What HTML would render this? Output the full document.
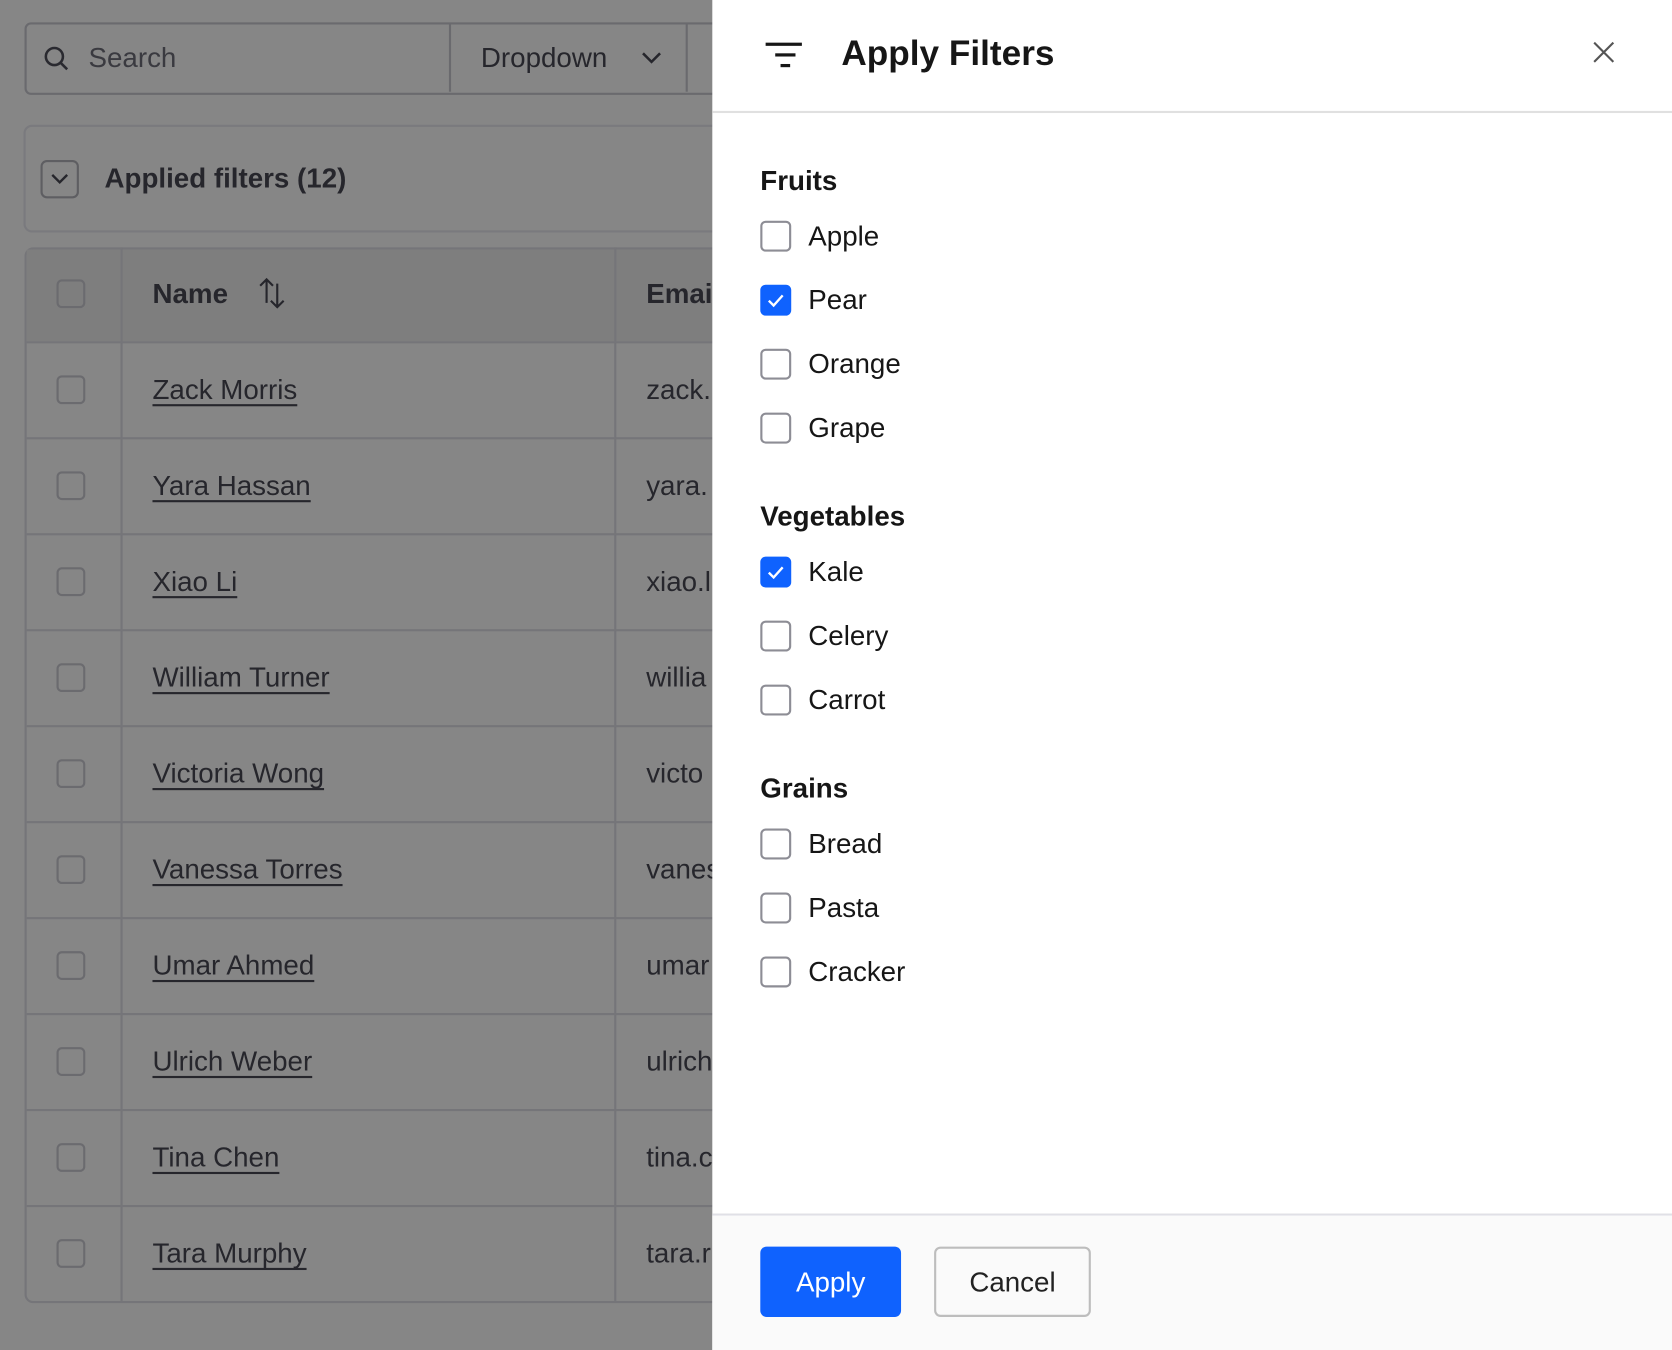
<!DOCTYPE html>
<html><head><meta charset="utf-8"><style>
html,body{margin:0;padding:0;width:1672px;height:1350px;overflow:hidden;background:#868686}
#s{position:absolute;left:0;top:0;width:1568px;height:1266px;transform:scale(1.06633,1.06635);transform-origin:0 0;font-family:"Liberation Sans",sans-serif}
.a{position:absolute}
.cb{position:absolute;width:27px;height:27px;border:2px solid #6b6b6f;border-radius:5px;box-sizing:border-box}
.lt{color:#26262c}
.pcb{position:absolute;left:713px;width:29px;height:29px;border:2px solid #8d8d95;border-radius:5px;box-sizing:border-box;background:#fff}
.pcb.on{background:#0f62fe;border-color:#0f62fe}
.lab{position:absolute;left:758px;font-size:26px;color:#161616;line-height:30px}
.sec{position:absolute;left:713px;font-size:26px;font-weight:bold;color:#161616;line-height:30px}
</style></head><body><div id="s">
<!-- left dimmed content -->
<div class="a" style="left:23px;top:21px;width:660px;height:64px;border:2px solid #6a6a6e;border-radius:6px"></div>
<div class="a" style="left:421px;top:22px;width:2px;height:64px;background:#6a6a6e"></div>
<div class="a" style="left:643px;top:22px;width:2px;height:64px;background:#6a6a6e"></div>
<svg class="a" style="left:40px;top:42px" width="26" height="26" viewBox="0 0 26 26"><circle cx="11" cy="11" r="8" fill="none" stroke="#2a2a30" stroke-width="2.4"/><path d="M17 17l6 6" stroke="#2a2a30" stroke-width="2.4"/></svg>
<div class="a" style="left:83px;top:39px;font-size:26px;color:#3a3a40">Search</div>
<div class="a lt" style="left:451px;top:39px;font-size:26px">Dropdown</div>
<svg class="a" style="left:600px;top:46px" width="22" height="16" viewBox="0 0 22 16"><path d="M3 4l8 8 8-8" fill="none" stroke="#26262c" stroke-width="2.4"/></svg>
<div class="a" style="left:22px;top:117px;width:680px;height:97px;border:2px solid #7a7a7e;border-radius:8px"></div>
<div class="a" style="left:38px;top:150px;width:36px;height:36px;border:2px solid #5e5e62;border-radius:6px;box-sizing:border-box"></div>
<svg class="a" style="left:44px;top:158px" width="24" height="20" viewBox="0 0 24 20"><path d="M5 6l7 7 7-7" fill="none" stroke="#26262c" stroke-width="2.2"/></svg>
<div class="a lt" style="left:98px;top:152px;font-size:26px;font-weight:bold">Applied filters (12)</div>
<div class="a" style="left:23px;top:232px;width:680px;height:986px;border:2px solid #757579;border-radius:8px"></div>
<div class="a" style="left:25px;top:234px;width:660px;height:86px;background:#7e7e7e"></div>
<div class="a" style="left:113px;top:232px;width:2px;height:988px;background:#757579"></div>
<div class="a" style="left:576px;top:232px;width:2px;height:988px;background:#757579"></div>
<div class="a lt" style="left:143px;top:260px;font-size:26px;font-weight:bold">Name</div>
<svg class="a" style="left:240px;top:258px" width="30" height="34" viewBox="0 0 30 34"><path d="M10 26V4M4 10l6-6 6 6M20 8v22M14 24l6 6 6-6" fill="none" stroke="#26262c" stroke-width="2"/></svg>
<div class="a lt" style="left:606px;top:260px;font-size:26px;font-weight:bold">Email</div>
<div class="cb" style="left:53px;top:262px"></div>
<div id="rows"></div>
<script>
var n=[["Zack Morris","zack."],["Yara Hassan","yara."],["Xiao Li","xiao.l"],["William Turner","willia"],["Victoria Wong","victo"],["Vanessa Torres","vanes"],["Umar Ahmed","umar"],["Ulrich Weber","ulrich"],["Tina Chen","tina.c"],["Tara Murphy","tara.r"]];
var h="";for(var i=0;i<n.length;i++){var y=320+i*90;
h+='<div class="a" style="left:25px;top:'+y+'px;width:660px;height:2px;background:#757579"></div>';
h+='<div class="cb" style="left:53px;top:'+(y+32)+'px"></div>';
h+='<div class="a lt" style="left:143px;top:'+(y+30)+'px;font-size:26px;text-decoration:underline;text-underline-offset:5px">'+n[i][0]+'</div>';
h+='<div class="a lt" style="left:606px;top:'+(y+30)+'px;font-size:26px">'+n[i][1]+'</div>';}
document.getElementById("rows").innerHTML=h;
</script>
<!-- panel -->
<div class="a" style="left:668px;top:0;width:900px;height:1266px;background:#fff"></div>
<div class="a" style="left:668px;top:104px;width:900px;height:2px;background:#e0e0e0"></div>
<div class="a" style="left:718px;top:40px;width:34px;height:3px;background:#161616"></div>
<div class="a" style="left:727px;top:50px;width:19px;height:3px;background:#161616"></div>
<div class="a" style="left:732px;top:60px;width:9px;height:3px;background:#161616"></div>
<div class="a" style="left:789px;top:31px;font-size:33px;font-weight:bold;color:#161616">Apply Filters</div>
<svg class="a" style="left:1492px;top:37px" width="24" height="24" viewBox="0 0 24 24"><path d="M3 3l18 18M21 3L3 21" stroke="#555" stroke-width="2"/></svg>
<div id="p"></div>
<script>
var g=[["Fruits",154,[["Apple",0],["Pear",1],["Orange",0],["Grape",0]]],["Vegetables",469,[["Kale",1],["Celery",0],["Carrot",0]]],["Grains",724,[["Bread",0],["Pasta",0],["Cracker",0]]]];
var s="";g.forEach(function(x){s+='<div class="sec" style="top:'+x[1]+'px">'+x[0]+'</div>';
x[2].forEach(function(it,j){var c=x[1]+67+j*60;
s+='<div class="pcb'+(it[1]?' on':'')+'" style="top:'+(c-14)+'px">'+(it[1]?'<svg width="25" height="25" viewBox="0 0 25 25" style="display:block"><path d="M6 13l4.5 4.5L19 8" fill="none" stroke="#fff" stroke-width="2.2"/></svg>':'')+'</div>';
s+='<div class="lab" style="top:'+(c-15)+'px">'+it[0]+'</div>';});});
document.getElementById("p").innerHTML=s;
</script>
<div class="a" style="left:668px;top:1138px;width:900px;height:2px;background:#e0e0e6"></div>
<div class="a" style="left:668px;top:1140px;width:900px;height:126px;background:#fafafa"></div>
<div class="a" style="left:713px;top:1169px;width:132px;height:66px;background:#0f62fe;border-radius:6px;color:#fff;font-size:26px;line-height:66px;text-align:center">Apply</div>
<div class="a" style="left:876px;top:1169px;width:147px;height:66px;border:2px solid #bdbdbd;box-sizing:border-box;background:#fafafa;border-radius:6px;color:#222;font-size:26px;line-height:62px;text-align:center">Cancel</div>
</div></body></html>
